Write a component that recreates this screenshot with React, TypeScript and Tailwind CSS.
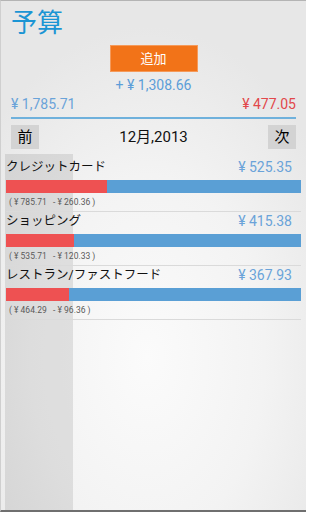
const rows = [
  { name: "クレジットカード", amount: "525.35", budget: "785.71", spent: "260.36", pct: 34.1 },
  { name: "ショッピング", amount: "415.38", budget: "535.71", spent: "120.33", pct: 23.0 },
  { name: "レストラン/ファストフード", amount: "367.93", budget: "464.29", spent: "96.36", pct: 21.3 },
];

const font = "font-['Roboto','Noto_Sans_CJK_JP',sans-serif]";

export default function App() {
  return (
    <div
      className={`${font} relative h-[512px] w-[306px] overflow-hidden border-t border-b-2 border-l border-t-[#b4b4b4] border-b-[#6f6f6f] border-l-[#cfcfcf] bg-[radial-gradient(ellipse_70%_65%_at_48%_70%,#fbfbfb_0%,#f3f3f3_55%,#e7e7e7_100%)]`}
    >
      {/* header */}
      <div className="px-[10px]">
        <h1 className="pt-[7px] text-[26px] leading-[31px] text-[#1b95d4]">予算</h1>
        <button className="mx-auto mt-[6px] flex h-[27px] w-[88px] items-center justify-center border border-[#f59a5a] bg-[#f27318] text-[13px] text-white">
          追加
        </button>
        <div className="mt-[4px] text-center text-[14px] leading-[18px] text-[#5c9ed8]">+ ¥ 1,308.66</div>
        <div className="mt-[1px] flex justify-between text-[14px] leading-[18px]">
          <span className="text-[#6aa3d9]">¥ 1,785.71</span>
          <span className="text-[#e2474a]">¥ 477.05</span>
        </div>
        <div className="mt-[4px] h-[2px] bg-[#6fb1dc]" />
        <div className="mt-[6px] flex items-center justify-between">
          <button className="flex h-[24px] w-[28px] items-center justify-center bg-[#d3d3d3] text-[15px] text-black">前</button>
          <span className="text-[15px] text-[#111]">12月,2013</span>
          <button className="flex h-[24px] w-[28px] items-center justify-center bg-[#d3d3d3] text-[15px] text-black">次</button>
        </div>
      </div>

      {/* list */}
      <div className="relative mt-[5px] px-[5px] pt-[4px]">
        <div className="absolute left-[4px] top-0 h-[400px] w-[68px] bg-black/[0.09]" />
        {rows.map((r) => (
          <div key={r.name} className="relative border-b border-[#dadada]">
            <div className="flex h-[17px] items-center justify-between pr-[9px] pt-[2px]">
              <span className="text-[12.5px] text-[#111]">{r.name}</span>
              <span className="text-[14px] text-[#6aa3d9]">¥ {r.amount}</span>
            </div>
            <div className="mt-[5px] flex h-[13px] bg-[#5a9fd5]">
              <div className="h-full bg-[#ee5152]" style={{ width: `${r.pct}%` }} />
            </div>
            <div className="flex h-[18px] items-center pl-[3px] text-[8.5px] text-[#5a5a5a]">
              ( ¥ {r.budget}&nbsp;&nbsp; - ¥ {r.spent} )
            </div>
          </div>
        ))}
      </div>
    </div>
  );
}
